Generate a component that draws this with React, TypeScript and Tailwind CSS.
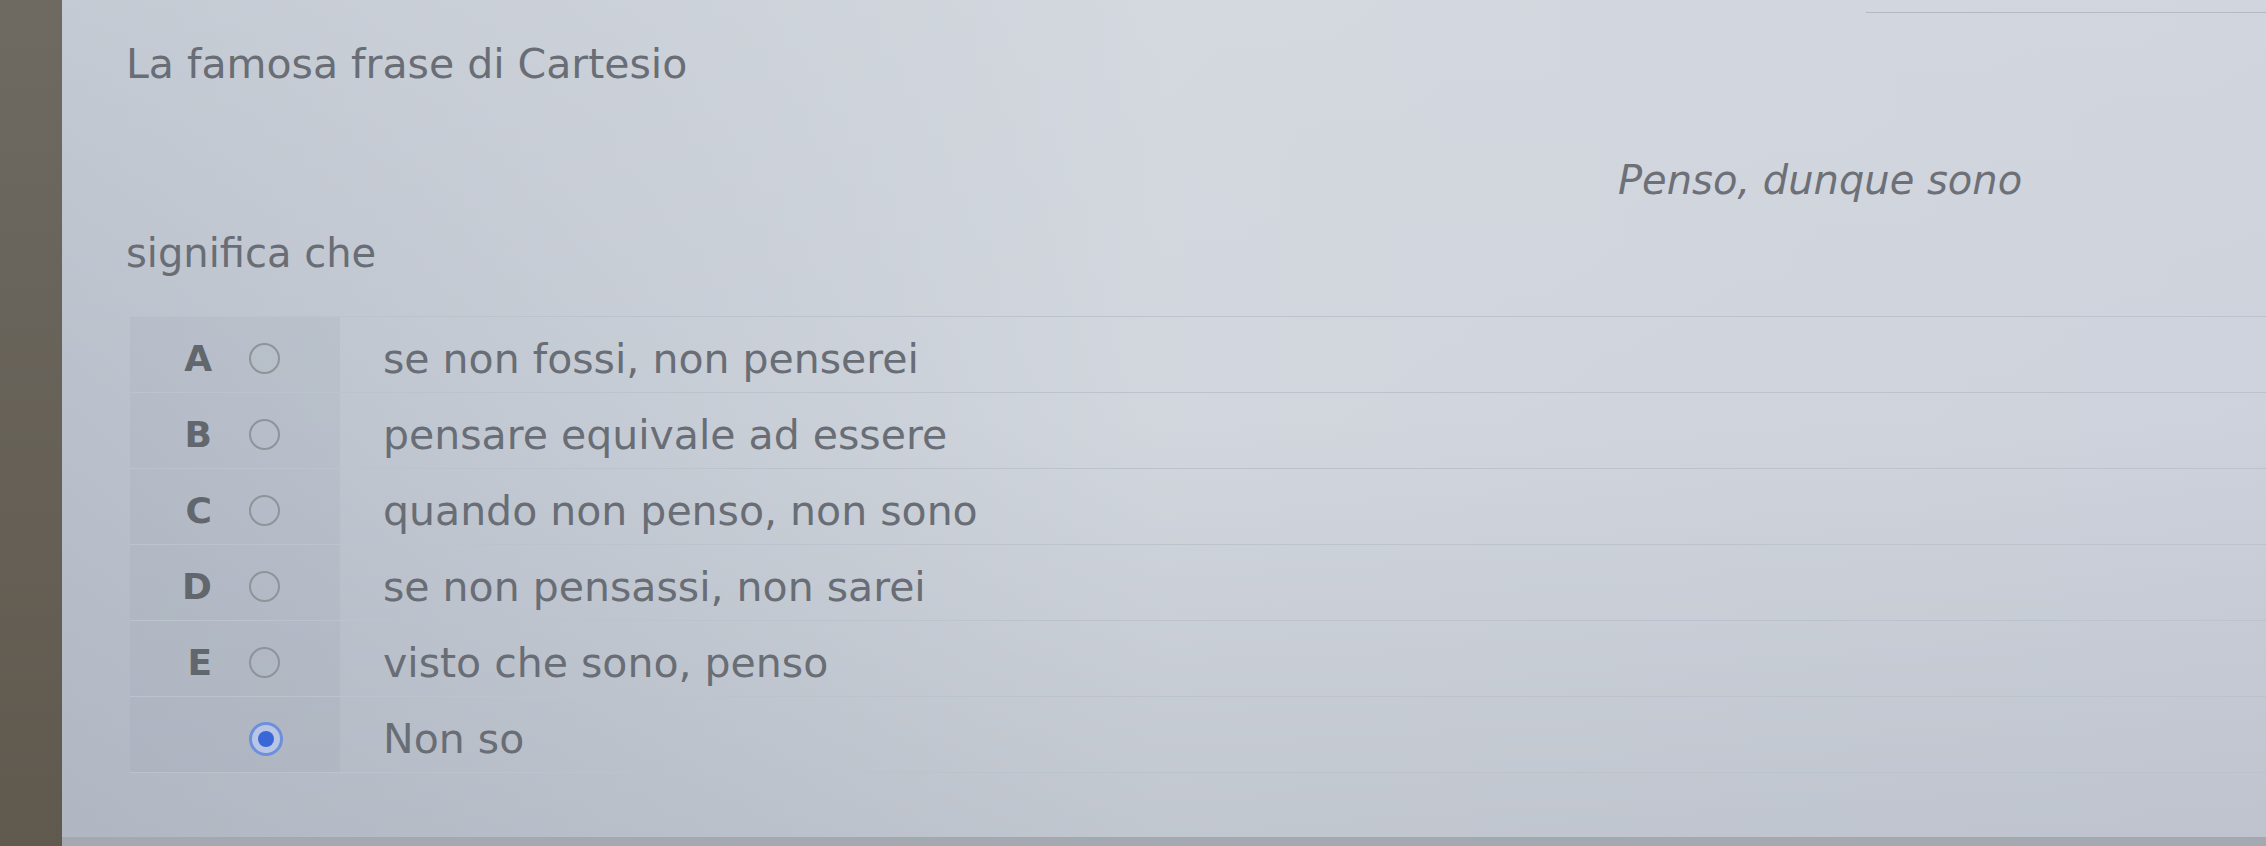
import React from 'react';

type Option = { label: string; text: string; checked?: boolean };

const options: Option[] = [
  { label: 'A', text: 'se non fossi, non penserei' },
  { label: 'B', text: 'pensare equivale ad essere' },
  { label: 'C', text: 'quando non penso, non sono' },
  { label: 'D', text: 'se non pensassi, non sarei' },
  { label: 'E', text: 'visto che sono, penso' },
  { label: '', text: 'Non so', checked: true },
];

const Radio: React.FC<{ checked?: boolean }> = ({ checked }) =>
  checked ? (
    <span className="flex h-[34px] w-[34px] items-center justify-center rounded-full border-[3px] border-[#6e8fdc] bg-[#b8c5e4]">
      <span className="h-[16px] w-[16px] rounded-full bg-[#3a67d8]" />
    </span>
  ) : (
    <span className="h-[31px] w-[31px] rounded-full border-2 border-[#8f939a]" />
  );

const OptionRow: React.FC<{ option: Option }> = ({ option }) => (
  <div className="flex h-[76px] border-b border-[#bdc3cc]">
    {/* label + radio column */}
    <div className="flex w-[210px] items-center bg-[#8a93a3]/12 pl-[46px] pt-2">
      <span className="w-[36px] text-right text-[36px] font-bold leading-[48px] text-[#62666d]">
        {option.label}
      </span>
      <span className="ml-[37px] flex items-center">
        <Radio checked={option.checked} />
      </span>
    </div>
    <div className="flex flex-1 items-center pl-[43px] pt-2 text-[41px] leading-[48px] text-[#696d75]">
      {option.text}
    </div>
  </div>
);

export default function App() {
  return (
    <div
      className="flex h-[846px] w-[2266px] overflow-hidden"
      style={{ fontFamily: '"DejaVu Sans", Verdana, sans-serif' }}
    >
      {/* monitor bezel */}
      <div className="w-[62px] shrink-0 bg-linear-to-b from-[#6e6a62] to-[#60594e]" />

      <div className="flex flex-1 flex-col">
        <div className="flex-1 bg-linear-to-r from-[#b9c0cb] via-[#d2d7de] to-[#ced2dc]">
          <div className="flex h-full flex-col bg-linear-to-b from-[#d6dae0]/40 via-transparent to-[#9aa1ad]/30">
            {/* thin header rule */}
            <div className="flex h-[13px] justify-end">
              <div className="w-[400px] border-b border-[#b4bac4]" />
            </div>

            <div className="pl-[64px] pt-[27px] text-[41px] leading-[48px] text-[#696d75]">
              La famosa frase di Cartesio
            </div>

            <div className="mt-[68px] pl-[1556px] text-[40px] italic leading-[48px] text-[#6d7077]">
              Penso, dunque sono
            </div>

            <div className="mt-[25px] pl-[64px] text-[40px] leading-[48px] text-[#696d75]">
              significa che
            </div>

            <div className="ml-[68px] mt-[39px] border-t border-[#bdc3cc]">
              {options.map((o) => (
                <OptionRow key={o.text} option={o} />
              ))}
            </div>
          </div>
        </div>
        <div className="h-[9px] bg-[#a3a8b1]" />
      </div>
    </div>
  );
}
